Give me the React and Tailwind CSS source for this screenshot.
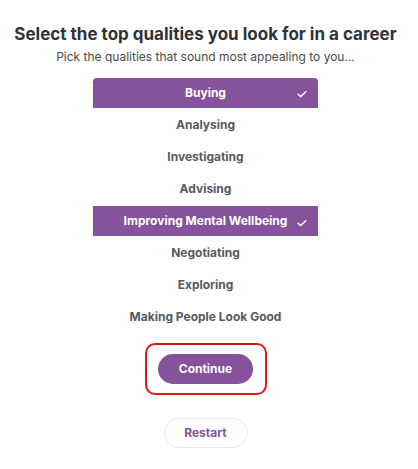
const options = [
  { label: "Buying", selected: true },
  { label: "Analysing" },
  { label: "Investigating" },
  { label: "Advising" },
  { label: "Improving Mental Wellbeing", selected: true },
  { label: "Negotiating" },
  { label: "Exploring" },
  { label: "Making People Look Good" },
]

function Check() {
  return (
    <svg width="10" height="8" viewBox="0 0 10 8" fill="none">
      <path d="M1 4.2 L3.8 6.6 L9 1.4" stroke="white" strokeWidth="1.4" strokeLinecap="round" strokeLinejoin="round" />
    </svg>
  )
}

export default function App() {
  return (
    <div className="w-[418px] h-[469px] bg-white flex flex-col items-center pt-[23px] pr-[7px]" style={{ fontFamily: "Inter, 'Open Sans', sans-serif" }}>
      <h1 className="text-[17px] leading-[22px] font-bold text-[#2f3338]">
        Select the top qualities you look for in a career
      </h1>
      <p className="mt-[3px] text-[12px] leading-[18px] text-[#4a4a4a]">
        Pick the qualities that sound most appealing to you...
      </p>
      <ul className="mt-[12px] w-[225px] flex flex-col gap-[2px]">
        {options.map((o, i) => (
          <li
            key={o.label}
            className={
              o.selected
                ? "relative h-[30px] flex items-center justify-center bg-[#86529b] text-white text-[12px] font-bold " + (i === 0 ? "rounded-t-[4px]" : "")
                : "h-[30px] flex items-center justify-center text-[#555a5f] text-[12px] font-bold"
            }
          >
            {o.label}
            {o.selected && (
              <span className={o.label === "Buying" ? "absolute right-[11px] top-[12px]" : "absolute right-[11px] top-[13px]"}>
                <Check />
              </span>
            )}
          </li>
        ))}
      </ul>
      <div className="mt-[11px] w-[122px] h-[52px] border-2 border-[#e3141b] rounded-[10px] flex items-center justify-center">
        <button className="w-[95px] h-[30px] rounded-full bg-[#86529b] text-white text-[12px] font-bold">
          Continue
        </button>
      </div>
      <button className="mt-[23px] w-[84px] h-[30px] rounded-full border border-[#efe6f1] text-[#86529b] text-[12px] font-bold">
        Restart
      </button>
    </div>
  )
}
